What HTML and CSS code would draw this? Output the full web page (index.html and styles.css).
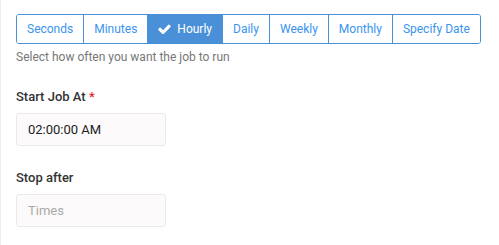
FILE: index.html
```html
<!DOCTYPE html>
<html>
<head>
<meta charset="utf-8">
<link rel="stylesheet" href="styles.css">
</head>
<body>
<div class="panel">
  <div class="btn-group">
    <button class="btn">Seconds</button>
    <button class="btn">Minutes</button>
    <button class="btn active"><svg class="check" viewBox="100 300 1600 1150" width="13" height="10"><path fill="#fff" d="M1671 566q0 40-28 68l-724 724-136 136q-28 28-68 28t-68-28l-136-136-362-362q-28-28-28-68t28-68l136-136q28-28 68-28t68 28l294 295 656-657q28-28 68-28t68 28l136 136q28 28 28 68z"/></svg>Hourly</button>
    <button class="btn">Daily</button>
    <button class="btn">Weekly</button>
    <button class="btn">Monthly</button>
    <button class="btn">Specify Date</button>
  </div>
  <p class="help">Select how often you want the job to run</p>

  <div class="field first">
    <label class="label">Start Job At <span class="req">*</span></label>
    <input class="input" type="text" value="02:00:00 AM">
  </div>

  <div class="field">
    <label class="label">Stop after</label>
    <input class="input" type="text" placeholder="Times">
  </div>
</div>
</body>
</html>
```

FILE: styles.css
```css
html, body {
  margin: 0;
  padding: 0;
  background: #fff;
  font-family: Roboto, "Liberation Sans", sans-serif;
}
.panel {
  border-left: 1px solid #ececec;
  padding: 14px 0 0 15px;
  height: 245px;
  box-sizing: border-box;
}
.btn-group {
  display: inline-flex;
  border: 1px solid #4a90d9;
  border-radius: 3px;
  overflow: hidden;
}
.btn {
  font-family: inherit;
  font-size: 12px;
  color: #3a94ee;
  background: #fff;
  border: none;
  border-left: 1px solid #4a90d9;
  height: 28px;
  padding: 0 10px;
  margin: 0;
  display: flex;
  align-items: center;
  gap: 6px;
}
.btn:first-child { border-left: none; }
.btn.active {
  background: #4a90d9;
  color: #fff;
}
.check { display: block; }
.help {
  margin: 5px 0 0;
  font-size: 12px;
  color: #777;
  line-height: 16px;
}
.field { margin-top: 24px; }
.label {
  display: block;
  font-size: 13px;
  font-weight: 500;
  color: #333;
  line-height: 16px;
  margin-bottom: 8px;
}
.req { color: #e8222b; }
.input {
  display: block;
  width: 150px;
  height: 33px;
  box-sizing: border-box;
  border: 1px solid #eaeaea;
  border-radius: 3px;
  background: #fcfafa;
  padding: 0 11px;
  font-family: inherit;
  font-size: 13px;
  color: #222;
  outline: none;
}
.input::placeholder { color: #aaa; }
```
